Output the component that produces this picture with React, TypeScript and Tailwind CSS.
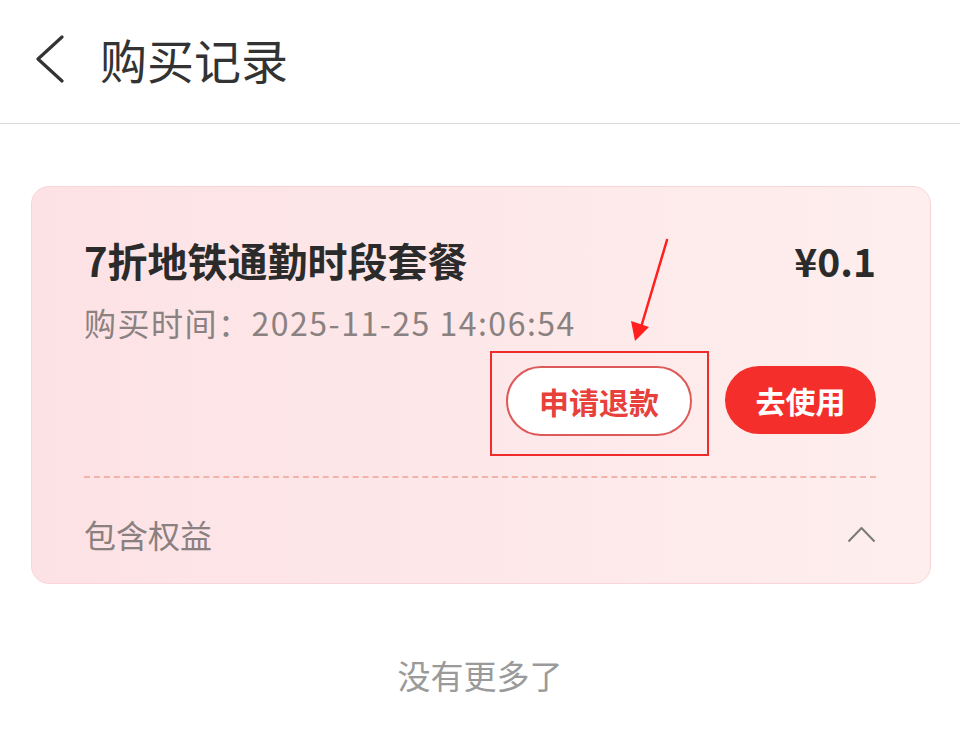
import React from "react";

const font = { fontFamily: '"Noto Sans CJK SC", "Noto Sans", sans-serif' };

export default function App() {
  return (
    <div className="relative w-[960px] h-[731px] overflow-hidden bg-white" style={font}>
      {/* Header */}
      <div className="h-[124px] border-b border-[#dcdcdc] flex items-start">
        <svg className="ml-[35px] mt-[35px]" width="30" height="48" viewBox="0 0 30 48" fill="none">
          <polyline points="27,2 3,24 27,46" stroke="#333" strokeWidth="3.2" strokeLinecap="round" strokeLinejoin="round" />
        </svg>
        <h1 className="ml-[35px] mt-[30px] text-[47px] leading-[58px] text-[#333] font-normal">购买记录</h1>
      </div>

      {/* Card */}
      <div className="ml-[31px] mt-[62px] w-[900px] rounded-[18px] border border-[#f9d5d9] bg-gradient-to-r from-[#fde2e5] to-[#feeeee] pl-[52px] pr-[54px]">
        <div className="pt-[49px] flex items-center justify-between">
          <div className="text-[40px] leading-[48px] font-bold text-[#2b2b2b]">7折地铁通勤时段套餐</div>
          <div className="text-[39px] leading-[48px] font-bold text-[#2b2b2b]">¥0.1</div>
        </div>
        <div className="mt-[18px] text-[32px] leading-[40px] tracking-[1.5px] text-[#8a8181]">购买时间：2025-11-25 14:06:54</div>
        <div className="mt-[24px] flex justify-end gap-[33px]">
          <button className="w-[186px] h-[70px] rounded-full border-2 border-[#de5a58] bg-white text-[30px] font-bold text-[#e8403a]">
            申请退款
          </button>
          <button className="w-[151px] h-[68px] rounded-full bg-[#f42e2a] text-[30px] font-bold text-white">
            去使用
          </button>
        </div>
        <div className="mt-[40px] border-t-2 border-dashed border-[#f3b2aa]" />
        <div className="pt-[36px] pb-[29px] flex items-center justify-between">
          <span className="text-[32px] leading-[40px] text-[#8a8080]">包含权益</span>
          <svg width="29" height="17" viewBox="0 0 29 17" fill="none">
            <polyline points="1.5,15.5 14.5,2 27.5,15.5" stroke="#7a7a7a" strokeWidth="2" strokeLinejoin="round" />
          </svg>
        </div>
      </div>

      <div className="mt-[69px] text-center text-[33px] leading-[44px] text-[#9a9a9a]">没有更多了</div>

      {/* Annotation overlay */}
      <div className="absolute left-[490px] top-[351px] w-[219px] h-[105px] border-2 border-[#f02b2b] pointer-events-none" />
      <svg className="absolute left-0 top-0 pointer-events-none" width="960" height="731">
        <line x1="667" y1="240" x2="642" y2="324" stroke="#ff1f1f" strokeWidth="2.5" strokeLinecap="round" />
        <polygon points="635,341 631,321 649,327" fill="#ff1f1f" />
      </svg>
    </div>
  );
}
